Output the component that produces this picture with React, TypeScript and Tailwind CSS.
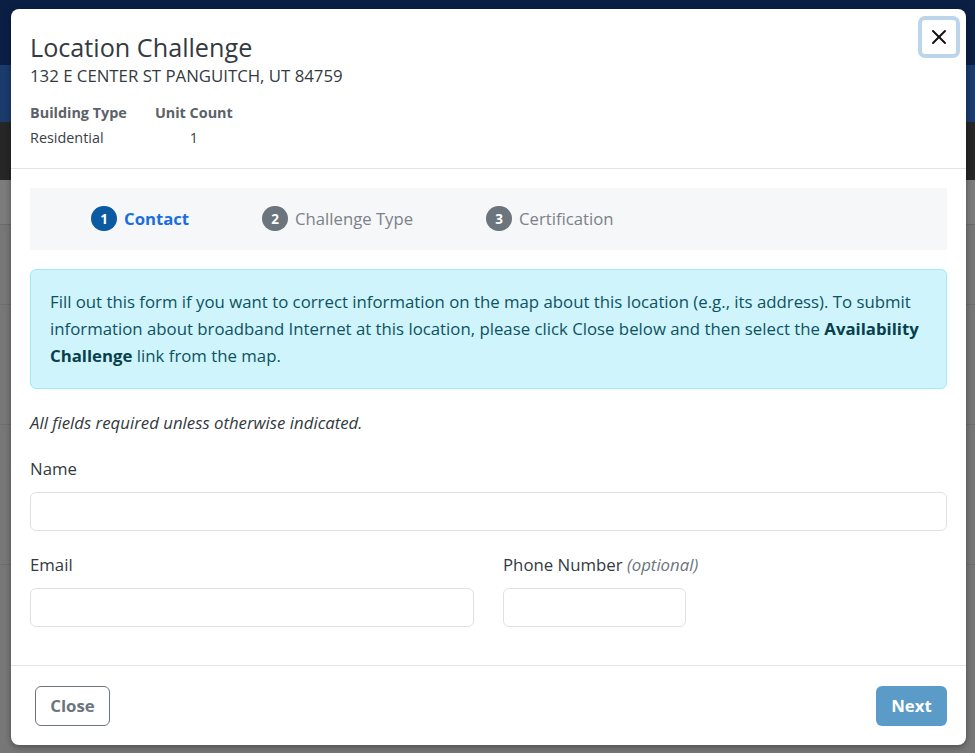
import { X } from "lucide-react";

const font = { fontFamily: '"Open Sans", "Noto Sans", sans-serif' };

function Step({ n, label, active }: { n: number; label: string; active?: boolean }) {
  return (
    <div className="flex items-center gap-[7px]">
      <span
        className={
          "flex h-[25px] w-[26px] items-center justify-center rounded-full text-[13.5px] font-bold text-white " +
          (active ? "bg-[#0b5aa2]" : "bg-[#6c757d]")
        }
      >
        {n}
      </span>
      <span className={active ? "text-[16.7px] font-bold text-[#1a6ee0]" : "text-[16.7px] text-[#7b8188]"}>{label}</span>
    </div>
  );
}

export default function App() {
  return (
    <div className="relative h-[753px] w-[975px] overflow-hidden bg-[#787878]" style={font}>
      {/* dimmed page behind the dialog */}
      <div className="h-[65px] bg-[#0b1f45]" />
      <div className="h-[57px] bg-[#1b3b6d]" />
      <div className="h-[58px] bg-[#262626]" />
      <div className="h-[45px] border-b border-[#6a6a6a] bg-[#7c7c7c]" />
      <div className="flex h-[573px] flex-col bg-[#777777]">
        <div className="h-[80px] border-b border-[#6d6d6d]" />
        <div className="h-[120px] border-b border-[#6d6d6d]" />
        <div className="h-[140px] border-b border-[#6d6d6d]" />
      </div>

      {/* dialog */}
      <div className="absolute left-[11px] top-[9px] flex h-[736px] w-[955px] flex-col rounded-[8px] bg-white shadow-[0_2px_6px_rgba(0,0,0,0.35)]">
        <div className="relative border-b border-[#e3e5e8] px-[19px] pb-[18px] pt-[23px]">
          <h1 className="text-[25.2px] leading-[31px] text-[#333a40]">Location Challenge</h1>
          <p className="text-[16.8px] leading-[25px] text-[#333a40]">132 E CENTER ST PANGUITCH, UT 84759</p>
          <div className="mt-[12px] grid w-max grid-cols-[auto_auto] gap-x-[28px] text-[14.4px] leading-[25px] text-[#3a4046]">
            <span className="font-bold text-[#5c6268]">Building Type</span>
            <span className="font-bold text-[#5c6268]">Unit Count</span>
            <span>Residential</span>
            <span className="text-center">1</span>
          </div>
          <button className="absolute right-[6px] top-[7px] flex h-[42px] w-[42px] items-center justify-center rounded-[7px] bg-white ring-[4px] ring-[#bcd5ea] ring-inset">
            <X className="h-[24px] w-[24px] text-[#111]" strokeWidth={2} />
          </button>
        </div>

        <div className="flex-1 px-[19px] pt-[19px]">
          <div className="flex h-[62px] items-center gap-[73px] bg-[#f6f7f9] pl-[61px]">
            <Step n={1} label="Contact" active />
            <Step n={2} label="Challenge Type" />
            <Step n={3} label="Certification" />
          </div>

          <div className="mt-[19px] rounded-[6px] border border-[#9feaf8] bg-[#cff4fc] px-[19px] pb-[19px] pt-[18px] text-[16.8px] leading-[27px] text-[#0d5261]">
            Fill out this form if you want to correct information on the map about this location (e.g., its address). To submit
            information about broadband Internet at this location, please click Close below and then select the{" "}
            <b className="text-[#073f4c]">Availability Challenge</b> link from the map.
          </div>

          <p className="mt-[21px] text-[16.8px] italic leading-[25px] text-[#333a40]">All fields required unless otherwise indicated.</p>

          <label className="mt-[21px] block text-[16.8px] leading-[25px] text-[#333a40]">Name</label>
          <input className="mt-[11px] block h-[39px] w-full rounded-[6px] border border-[#dee2e6] bg-white outline-none" />

          <div className="mt-[21px] grid grid-cols-[444px_183px] gap-x-[29px]">
            <div>
              <label className="block text-[16.8px] leading-[25px] text-[#333a40]">Email</label>
              <input className="mt-[11px] block h-[39px] w-full rounded-[6px] border border-[#dee2e6] bg-white outline-none" />
            </div>
            <div>
              <label className="block whitespace-nowrap text-[16.8px] leading-[25px] text-[#333a40]">
                Phone Number <i className="text-[#6c757d]">(optional)</i>
              </label>
              <input className="mt-[11px] block h-[39px] w-full rounded-[6px] border border-[#dee2e6] bg-white outline-none" />
            </div>
          </div>
        </div>

        <div className="flex items-center justify-between border-t border-[#e3e5e8] px-[19px] pb-[19px] pt-[20px]">
          <button className="ml-[5px] h-[40px] w-[75px] rounded-[6px] border border-[#6c757d] text-[16.8px] font-bold text-[#6c757d]">
            Close
          </button>
          <button className="h-[40px] w-[71px] rounded-[6px] bg-[#5b9bc8] text-[16.8px] font-bold text-white">Next</button>
        </div>
      </div>
    </div>
  );
}
